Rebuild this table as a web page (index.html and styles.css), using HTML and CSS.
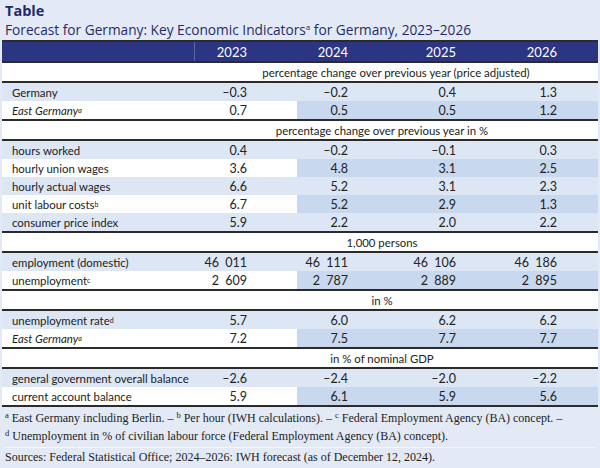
FILE: index.html
```html
<!DOCTYPE html>
<html lang="en">
<head>
<meta charset="utf-8">
<title>Forecast for Germany</title>
<link rel="stylesheet" href="styles.css">
</head>
<body>
<div class="page">
  <header class="titles">
    <div class="kicker">Table</div>
    <div class="subtitle">Forecast for Germany: Key Economic Indicators<sup>a</sup> for Germany, 2023–2026</div>
  </header>

  <div class="table">
    <div class="row head">
      <div class="cell label"></div>
      <div class="cell c1">2023</div>
      <div class="cell c2">2024</div>
      <div class="cell c3">2025</div>
      <div class="cell c4">2026</div>
    </div>

    <div class="row section"><div class="cell label"></div><div class="span first">percentage change over previous year (price adjusted)</div></div>
    <div class="row odd"><div class="cell label">Germany</div><div class="cell c1">–0.3</div><div class="cell c2">–0.2</div><div class="cell c3">0.4</div><div class="cell c4">1.3</div></div>
    <div class="row even"><div class="cell label it">East Germany<sup>a</sup></div><div class="cell c1">0.7</div><div class="cell c2">0.5</div><div class="cell c3">0.5</div><div class="cell c4">1.2</div></div>

    <div class="row section"><div class="cell label"></div><div class="span">percentage change over previous year in %</div></div>
    <div class="row odd"><div class="cell label">hours worked</div><div class="cell c1">0.4</div><div class="cell c2">–0.2</div><div class="cell c3">–0.1</div><div class="cell c4">0.3</div></div>
    <div class="row even"><div class="cell label">hourly union wages</div><div class="cell c1">3.6</div><div class="cell c2">4.8</div><div class="cell c3">3.1</div><div class="cell c4">2.5</div></div>
    <div class="row odd"><div class="cell label">hourly actual wages</div><div class="cell c1">6.6</div><div class="cell c2">5.2</div><div class="cell c3">3.1</div><div class="cell c4">2.3</div></div>
    <div class="row even"><div class="cell label">unit labour costs<sup>b</sup></div><div class="cell c1">6.7</div><div class="cell c2">5.2</div><div class="cell c3">2.9</div><div class="cell c4">1.3</div></div>
    <div class="row odd"><div class="cell label">consumer price index</div><div class="cell c1">5.9</div><div class="cell c2">2.2</div><div class="cell c3">2.0</div><div class="cell c4">2.2</div></div>

    <div class="row section"><div class="cell label"></div><div class="span">1,000 persons</div></div>
    <div class="row odd"><div class="cell label">employment (domestic)</div><div class="cell c1">46&ensp;011</div><div class="cell c2">46&ensp;111</div><div class="cell c3">46&ensp;106</div><div class="cell c4">46&ensp;186</div></div>
    <div class="row even"><div class="cell label">unemployment<sup>c</sup></div><div class="cell c1">2&ensp;609</div><div class="cell c2">2&ensp;787</div><div class="cell c3">2&ensp;889</div><div class="cell c4">2&ensp;895</div></div>

    <div class="row section"><div class="cell label"></div><div class="span">in %</div></div>
    <div class="row odd"><div class="cell label">unemployment rate<sup>d</sup></div><div class="cell c1">5.7</div><div class="cell c2">6.0</div><div class="cell c3">6.2</div><div class="cell c4">6.2</div></div>
    <div class="row even"><div class="cell label it">East Germany<sup>a</sup></div><div class="cell c1">7.2</div><div class="cell c2">7.5</div><div class="cell c3">7.7</div><div class="cell c4">7.7</div></div>

    <div class="row section"><div class="cell label"></div><div class="span">in % of nominal GDP</div></div>
    <div class="row odd"><div class="cell label">general government overall balance</div><div class="cell c1">–2.6</div><div class="cell c2">–2.4</div><div class="cell c3">–2.0</div><div class="cell c4">–2.2</div></div>
    <div class="row even last"><div class="cell label">current account balance</div><div class="cell c1">5.9</div><div class="cell c2">6.1</div><div class="cell c3">5.9</div><div class="cell c4">5.6</div></div>
  </div>

  <footer class="notes">
    <div class="fn">
      <p class="line"><sup>a</sup> East Germany including Berlin. – <sup>b</sup> Per hour (IWH calculations). – <sup>c</sup> Federal Employment Agency (BA) concept. –</p>
      <p class="line"><sup>d</sup> Unemployment in % of civilian labour force (Federal Employment Agency (BA) concept).</p>
    </div>
    <p class="src">Sources: Federal Statistical Office; 2024–2026: IWH forecast (as of December 12, 2024).</p>
  </footer>
</div>
</body>
</html>
```

FILE: styles.css
```css
html, body {
  margin: 0;
  padding: 0;
  background: #e3eaf6;
}
.page {
  width: 600px;
  height: 468px;
  overflow: hidden;
  background: #e3eaf6;
  color: #222222;
}
.titles {
  padding: 3px 5px 0 5px;
  height: 37px;
  color: #1f2a6c;
  font-family: "Open Sans", "Liberation Sans", sans-serif;
}
.kicker {
  font-weight: 700;
  font-size: 14.5px;
  line-height: 16px;
}
.subtitle {
  font-size: 13.7px;
  line-height: 20px;
  margin-top: 1px;
}
.subtitle sup {
  font-size: 8px;
  vertical-align: 5px;
  line-height: 0;
}
.table {
  margin: 0 2px;
  border-top: 2px solid #2b2b2b;
  font-family: "Lato", "Open Sans", sans-serif;
  font-size: 11.4px;
}
.row {
  display: grid;
  grid-template-columns: 192px 103px 100px 100px 101px;
  height: 18px;
  align-items: stretch;
}
.cell {
  display: flex;
  align-items: center;
  justify-content: flex-end;
  white-space: nowrap;
  font-size: 12.5px;
}
.cell.label {
  justify-content: flex-start;
  padding-left: 10px;
  font-size: 11.4px;
}
.c1 { padding-right: 50px; }
.c2 { padding-right: 49px; }
.c3 { padding-right: 41px; }
.c4 { padding-right: 41px; }
.it { font-style: italic; }
.cell sup {
  font-size: 7px;
  vertical-align: 4px;
  line-height: 0;
}
.head {
  height: 19px;
  background: #2b3582;
  color: #ffffff;
}
.head .cell { font-size: 13px; }
.head .c1 { border-left: 1px solid #5d66a6; }
.section {
  height: 18px;
  background: #ffffff;
  border-top: 2px solid #2b2b2b;
  border-bottom: 2px solid #2b2b2b;
}
.span {
  grid-column: 2 / 6;
  display: flex;
  align-items: center;
  justify-content: center;
  padding-right: 28px;
  white-space: nowrap;
}
.span.first { padding-right: 0; }
.odd { background: #dce6f4; }
.even { background: #ffffff; }
.even .c2, .even .c3, .even .c4 { background: #c8d8ee; }
.last { border-bottom: 2px solid #2b2b2b; }
.notes {
  padding: 2px 5px 0 5px;
  font-family: "Liberation Serif", serif;
  font-size: 12px;
  color: #222222;
}
.notes p { margin: 0; white-space: nowrap; }
.fn {
  padding-bottom: 2px;
  border-bottom: 1px solid #f4f7fc;
}
.line { line-height: 18px; }
.src {
  line-height: 18px;
}
.notes sup {
  font-size: 8.5px;
  vertical-align: 4px;
  line-height: 0;
}
```
